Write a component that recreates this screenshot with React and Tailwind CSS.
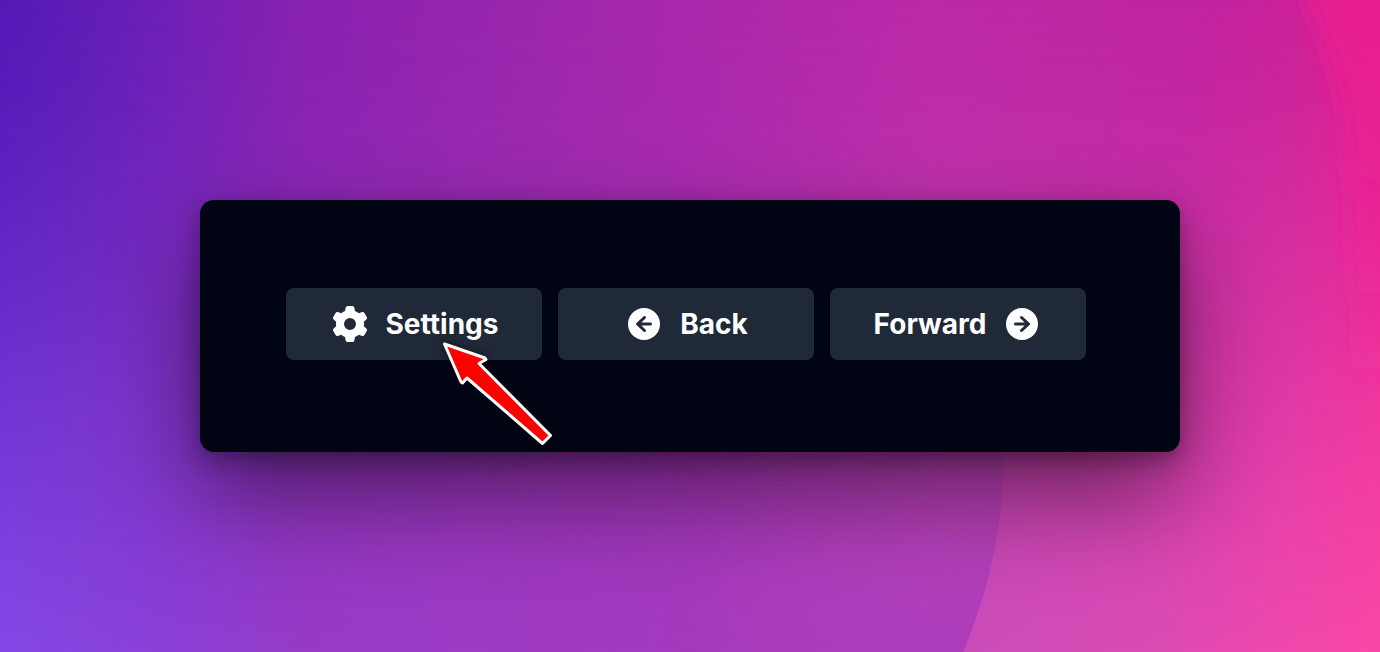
import { HiMiniArrowLeftCircle, HiMiniArrowRightCircle, HiMiniCog6Tooth } from 'react-icons/hi2'

// Wallpaper: two horizontal colour ramps blended top to bottom, plus soft blobs
function Wallpaper() {
  return (
    <svg
      className="absolute inset-0 h-full w-full"
      viewBox="0 0 1380 652"
      preserveAspectRatio="none"
      aria-hidden="true"
    >
      <defs>
        <linearGradient id="bottomRamp">
          <stop offset="0" stopColor="#8447e6" />
          <stop offset="0.12" stopColor="#8a40d6" />
          <stop offset="0.22" stopColor="#963bc7" />
          <stop offset="0.5" stopColor="#a53bbf" />
          <stop offset="0.7" stopColor="#ca4db9" />
          <stop offset="0.83" stopColor="#da4cb5" />
          <stop offset="0.92" stopColor="#ee49ae" />
          <stop offset="1" stopColor="#f948a8" />
        </linearGradient>
        <linearGradient id="topRamp">
          <stop offset="0" stopColor="#5419b6" />
          <stop offset="0.08" stopColor="#631eb6" />
          <stop offset="0.22" stopColor="#8922b0" />
          <stop offset="0.34" stopColor="#9525ac" />
          <stop offset="0.5" stopColor="#a928aa" />
          <stop offset="0.67" stopColor="#bb2aa8" />
          <stop offset="0.87" stopColor="#c1249f" />
          <stop offset="0.94" stopColor="#cb2299" />
          <stop offset="1" stopColor="#e41c8f" />
        </linearGradient>
        <linearGradient id="fade" x2="0" y2="1">
          <stop offset="0" stopColor="#fff" />
          <stop offset="0.15" stopColor="#ececec" />
          <stop offset="0.3" stopColor="#c8c8c8" />
          <stop offset="0.5" stopColor="#8a8a8a" />
          <stop offset="0.85" stopColor="#202020" />
          <stop offset="1" stopColor="#000" />
        </linearGradient>
        <linearGradient id="discFill" gradientUnits="userSpaceOnUse" x1="486" y1="0" x2="1004" y2="0">
          <stop offset="0" stopColor="#9936bc" stopOpacity="0" />
          <stop offset="1" stopColor="#a93bba" />
        </linearGradient>
        <linearGradient id="discFade" gradientUnits="userSpaceOnUse" x1="0" y1="440" x2="0" y2="652">
          <stop offset="0" stopColor="#444" />
          <stop offset="0.6" stopColor="#bbb" />
          <stop offset="1" stopColor="#fff" />
        </linearGradient>
        <linearGradient id="cornerFill" x2="0" y2="1">
          <stop offset="0" stopColor="#e71a8d" />
          <stop offset="0.4" stopColor="#e81f91" stopOpacity="0.8" />
          <stop offset="1" stopColor="#ec2b9a" stopOpacity="0" />
        </linearGradient>
        <mask id="topMask">
          <rect width="1380" height="652" fill="url(#fade)" />
        </mask>
        <mask id="discMask">
          <rect width="1380" height="652" fill="url(#discFade)" />
        </mask>
        <filter id="softEdge" x="-50%" y="-50%" width="200%" height="200%">
          <feGaussianBlur stdDeviation="11" />
        </filter>
      </defs>
      <rect width="1380" height="652" fill="url(#bottomRamp)" />
      <rect width="1380" height="652" fill="url(#topRamp)" mask="url(#topMask)" />
      <path d="M486 440 H1004 A518 518 0 0 1 963 652 H486Z" fill="url(#discFill)" mask="url(#discMask)" />
      <path
        d="M1280 -60 C1306 0 1334 50 1344 110 C1352 170 1350 260 1350 400 H1460 V-60Z"
        fill="url(#cornerFill)"
        filter="url(#softEdge)"
      />
    </svg>
  )
}

function Pointer() {
  return (
    <svg
      className="pointer-events-none absolute left-[154px] top-[50px] z-10 h-[110px] w-[116px] drop-shadow-[0_0_4px_rgba(0,0,0,0.5)]"
      viewBox="0 0 116 110"
      aria-hidden="true"
    >
      <path
        d="M4.5 6 L45 20 L46 21.5 L39 25.5 L110.5 97.5 L102.5 105.5 L27 40 L22.5 45 L21 44Z"
        fill="#ff0000"
        stroke="#fff"
        strokeWidth="3"
        strokeLinejoin="round"
      />
    </svg>
  )
}

function IconButton({ children }) {
  return (
    <button
      type="button"
      className="flex h-18 w-full items-center justify-center gap-4 rounded-lg bg-[#202937] text-[28px] leading-10 font-bold text-white"
    >
      {children}
    </button>
  )
}

export default function App() {
  return (
    <main className="relative isolate flex min-h-screen items-start p-[200px] font-['Inter',sans-serif]">
      <Wallpaper />
      <section className="relative grid flex-1 grid-cols-3 gap-4 rounded-[14px] bg-[#010413] pt-[88px] pr-[94px] pb-[92px] pl-[86px] shadow-[0_44px_96px_rgba(0,0,0,0.48),0_8px_22px_rgba(0,0,0,0.32)]">
        <div className="relative">
          <IconButton>
            <HiMiniCog6Tooth className="size-10" />
            Settings
          </IconButton>
          <Pointer />
        </div>
        <IconButton>
          <HiMiniArrowLeftCircle className="size-10" />
          Back
        </IconButton>
        <IconButton>
          Forward
          <HiMiniArrowRightCircle className="size-10" />
        </IconButton>
      </section>
    </main>
  )
}
